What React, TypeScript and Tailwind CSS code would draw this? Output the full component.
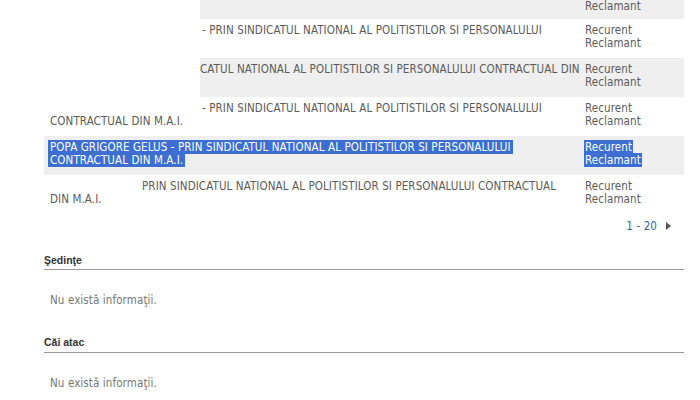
const sel = "bg-[#3c6fd1] text-white";

export default function App() {
  return (
    <div className="h-[400px] w-[700px] overflow-hidden bg-white font-['DejaVu_Sans_Condensed','DejaVu_Sans',sans-serif] text-[11.5px] leading-[13px] tracking-[0.1px] text-[#5b5b5b]">
      <div className="ml-[44px] w-[640px]">
        {/* table, scrolled: only the bottom of the first row shows */}
        <div className="flex h-[19px]">
          <div className="w-[156px]" />
          <div className="flex-1 bg-[#efefef]" />
          <div className="w-[104px] bg-[#efefef] pl-[5px]">Reclamant</div>
        </div>

        <div className="flex h-[39px] pt-[5px]">
          <div className="flex-1 whitespace-nowrap pl-[158px]">
            - PRIN SINDICATUL NATIONAL AL POLITISTILOR SI PERSONALULUI
          </div>
          <div className="w-[104px] pl-[5px]">
            Recurent
            <br />
            Reclamant
          </div>
        </div>

        <div className="flex h-[39px]">
          <div className="w-[156px]" />
          <div className="flex-1 whitespace-nowrap bg-[#efefef] pt-[5px]">
            CATUL NATIONAL AL POLITISTILOR SI PERSONALULUI CONTRACTUAL DIN
          </div>
          <div className="w-[104px] bg-[#efefef] pl-[5px] pt-[5px]">
            Recurent
            <br />
            Reclamant
          </div>
        </div>

        <div className="flex h-[39px] pt-[5px]">
          <div className="flex-1 whitespace-nowrap">
            <div className="pl-[158px]">
              - PRIN SINDICATUL NATIONAL AL POLITISTILOR SI PERSONALULUI
            </div>
            <div className="pl-[6px]">CONTRACTUAL DIN M.A.I.</div>
          </div>
          <div className="w-[104px] pl-[5px]">
            Recurent
            <br />
            Reclamant
          </div>
        </div>

        <div className="flex h-[39px] bg-[#efefef] pt-[5px]">
          <div className="flex-1 whitespace-nowrap pl-[4px]">
            <div>
              <span className={`${sel} px-[2px]`}>
                POPA GRIGORE GELUS - PRIN SINDICATUL NATIONAL AL POLITISTILOR SI PERSONALULUI
              </span>
            </div>
            <div>
              <span className={`${sel} px-[2px]`}>CONTRACTUAL DIN M.A.I.</span>
            </div>
          </div>
          <div className="w-[104px] pl-[4px]">
            <span className={`${sel} px-px`}>Recurent </span>
            <br />
            <span className={`${sel} px-px`}>Reclamant</span>
          </div>
        </div>

        <div className="flex h-[39px] pt-[5px]">
          <div className="flex-1 whitespace-nowrap">
            <div className="pl-[98px]">
              PRIN SINDICATUL NATIONAL AL POLITISTILOR SI PERSONALULUI CONTRACTUAL
            </div>
            <div className="h-[11px] overflow-hidden pl-[6px]">DIN M.A.I.</div>
          </div>
          <div className="w-[104px] pl-[5px]">
            Recurent
            <br />
            Reclamant
          </div>
        </div>

        {/* pager */}
        <div className="flex h-[24px] items-center justify-end gap-[9px] pr-[13px]">
          <span className="text-[#2c6a9e]">1 - 20</span>
          <svg width="5" height="8" viewBox="0 0 5 8">
            <path d="M0 0L5 4L0 8Z" fill="#555" />
          </svg>
        </div>

        <div className="mt-[15px] border-b border-[#9a9a9a] pb-[2px] font-['Liberation_Sans',Arial,sans-serif] text-[10.5px] leading-[14px] font-bold tracking-normal text-[#333]">
          Şedinţe
        </div>
        <div className="pl-[6px] pt-[24px] text-[#777]">Nu există informaţii.</div>

        <div className="mt-[28px] border-b border-[#9a9a9a] pb-[3px] font-['Liberation_Sans',Arial,sans-serif] text-[10.5px] leading-[14px] font-bold tracking-normal text-[#333]">
          Căi atac
        </div>
        <div className="pl-[6px] pt-[24px] text-[#777]">Nu există informaţii.</div>
      </div>
    </div>
  );
}
